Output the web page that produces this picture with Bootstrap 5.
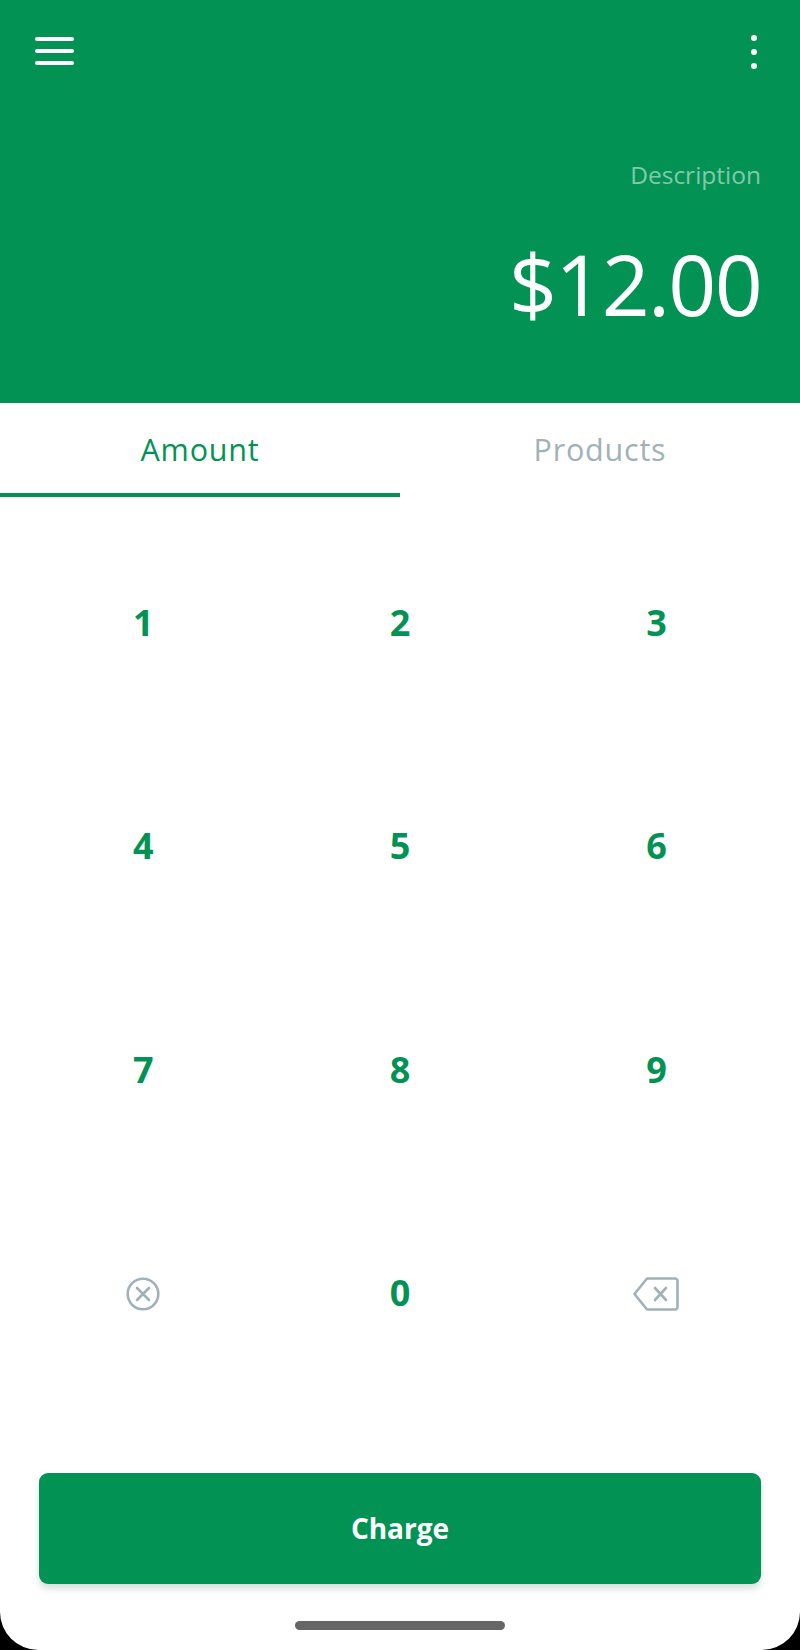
<!DOCTYPE html>
<html lang="en"><head><meta charset="utf-8">
<link rel="stylesheet" href="https://cdn.jsdelivr.net/npm/bootstrap@5.3.0/dist/css/bootstrap.min.css">
<style>
html,body{height:100%;background:#000}
body{font-family:"Open Sans","Liberation Sans",sans-serif}
.app-screen{width:800px;height:1650px;background:#fff;border-radius:0 0 38px 38px;overflow:hidden}
.hero{height:403px;background:#029354;padding:36px 39px 0 35px}
.dots-icon{margin:-1px 2px 0 0}
.hero-desc{font-size:24.5px;line-height:34px;color:#80c9aa;margin-top:89px}
.hero-amount{font-size:84px;line-height:100px;color:#fff;margin-top:42px;letter-spacing:-1.7px}
.tabs-row{height:94px}
.tabs-row .nav-link{height:94px;padding:26px 0 0;font-size:30.500px;line-height:40px;letter-spacing:.8px;color:#a0b2b8;border-bottom:4px solid transparent;font-weight:500}
.tabs-row .nav-link.active{color:#029354;border-bottom-color:#029354}
.keypad{padding:14px 15px 0;margin:0}
.key{height:223.500px;display:flex;align-items:center;justify-content:center;font-size:36px;font-weight:700;color:#029354;background:none;border:0;padding:0}
.key-icon{margin-top:1px}
.key-icon-back{margin:1px 2px 0 0}
.charge-wrap{padding:68px 39px 0}
.charge-btn{height:111px;padding:0 0 2px;background:#029354;color:#fff;font-size:28px;font-weight:700;border:0;border-radius:9px;box-shadow:0 5px 6px rgba(40,80,70,.18)}
.home-wrap{padding-top:37px}
.home-bar{width:210px;height:9px;background:#666;border-radius:5px}
</style></head>
<body>
<div class="app-screen d-flex flex-column">
  <header class="hero">
    <div class="d-flex justify-content-between align-items-start">
      <svg width="39" height="30" viewBox="0 0 39 30" aria-label="Menu"><g stroke="#fff" stroke-width="4" stroke-linecap="round"><path d="M2 3H37M2 15H37M2 27H37"/></g></svg>
      <svg class="dots-icon" width="10" height="34" viewBox="0 0 10 34" aria-label="More"><g fill="#fff"><circle cx="5" cy="3" r="3"/><circle cx="5" cy="17" r="3"/><circle cx="5" cy="31" r="3"/></g></svg>
    </div>
    <div class="hero-desc text-end">Description</div>
    <div class="hero-amount text-end">$12.00</div>
  </header>
  <ul class="nav nav-justified tabs-row">
    <li class="nav-item"><a class="nav-link active" href="#">Amount</a></li>
    <li class="nav-item"><a class="nav-link" href="#">Products</a></li>
  </ul>
  <div class="row g-0 keypad">
    <div class="col-4"><button class="key w-100">1</button></div>
    <div class="col-4"><button class="key w-100">2</button></div>
    <div class="col-4"><button class="key w-100">3</button></div>
    <div class="col-4"><button class="key w-100">4</button></div>
    <div class="col-4"><button class="key w-100">5</button></div>
    <div class="col-4"><button class="key w-100">6</button></div>
    <div class="col-4"><button class="key w-100">7</button></div>
    <div class="col-4"><button class="key w-100">8</button></div>
    <div class="col-4"><button class="key w-100">9</button></div>
    <div class="col-4"><button class="key w-100" aria-label="Clear"><svg class="key-icon" width="34" height="34" viewBox="0 0 34 34" fill="none" stroke="#a0b2b8" stroke-width="2.600" stroke-linecap="round"><circle cx="17" cy="17" r="15.300"/><path d="M11 11L23 23M23 11L11 23"/></svg></button></div>
    <div class="col-4"><button class="key w-100">0</button></div>
    <div class="col-4"><button class="key w-100" aria-label="Backspace"><svg class="key-icon-back" width="46" height="34" viewBox="0 0 46 34" fill="none" stroke="#a0b2b8" stroke-width="2.600" stroke-linejoin="round" stroke-linecap="round"><path d="M14 1.500H42A2.500 2.500 0 0 1 44.500 4V30A2.500 2.500 0 0 1 42 32.500H14L1.500 17Z"/><path d="M22 11L33 23M33 11L22 23"/></svg></button></div>
  </div>
  <div class="charge-wrap"><button class="btn charge-btn w-100">Charge</button></div>
  <div class="home-wrap d-flex justify-content-center"><div class="home-bar"></div></div>
</div>
<script src="https://cdn.jsdelivr.net/npm/bootstrap@5.3.0/dist/js/bootstrap.bundle.min.js"></script>
</body></html>
